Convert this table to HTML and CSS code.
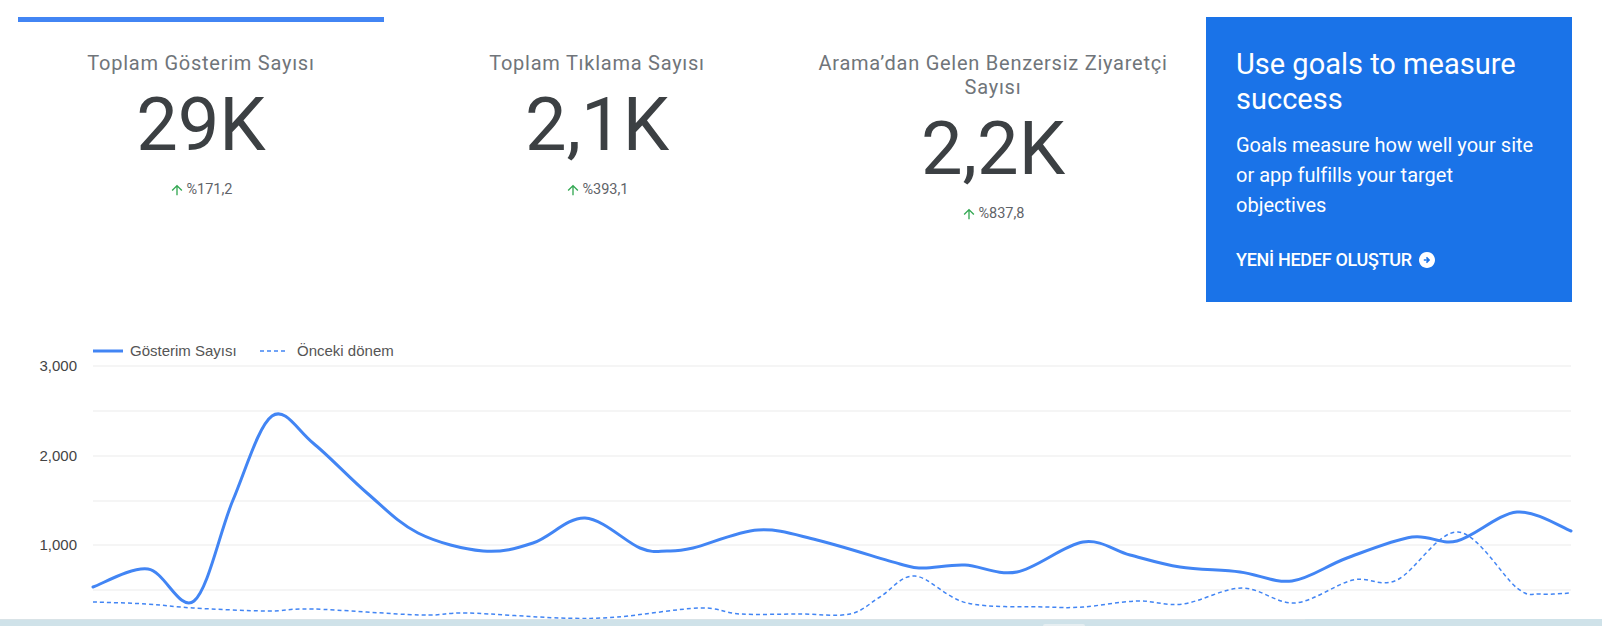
FILE: index.html
```html
<!DOCTYPE html>
<html lang="tr">
<head>
<meta charset="utf-8">
<title>Search Console özet</title>
<link rel="stylesheet" href="styles.css">
</head>
<body>
<div class="page">
  <div class="top">
    <div class="metric active">
      <div class="m-title">Toplam Gösterim Sayısı</div>
      <div class="m-value">29K</div>
      <div class="m-change"><svg class="up" viewBox="0 0 24 24"><path d="M4 12l1.41 1.41L11 7.83V20h2V7.83l5.58 5.59L20 12l-8-8-8 8z"/></svg><span>%171,2</span></div>
    </div>
    <div class="metric">
      <div class="m-title">Toplam Tıklama Sayısı</div>
      <div class="m-value">2,1K</div>
      <div class="m-change"><svg class="up" viewBox="0 0 24 24"><path d="M4 12l1.41 1.41L11 7.83V20h2V7.83l5.58 5.59L20 12l-8-8-8 8z"/></svg><span>%393,1</span></div>
    </div>
    <div class="metric">
      <div class="m-title">Arama’dan Gelen Benzersiz Ziyaretçi Sayısı</div>
      <div class="m-value">2,2K</div>
      <div class="m-change"><svg class="up" viewBox="0 0 24 24"><path d="M4 12l1.41 1.41L11 7.83V20h2V7.83l5.58 5.59L20 12l-8-8-8 8z"/></svg><span>%837,8</span></div>
    </div>
    <div class="goal-card">
      <h2 class="goal-title">Use goals to measure success</h2>
      <p class="goal-text">Goals measure how well your site or app fulfills your target objectives</p>
      <a class="goal-cta" href="#">YENİ HEDEF OLUŞTUR<svg class="cta-icon" viewBox="2 2 20 20"><path d="M12 2C6.48 2 2 6.48 2 12s4.48 10 10 10 10-4.48 10-10S17.52 2 12 2zm0 14l-1.41-1.41L12.17 13H8v-2h4.17l-1.59-1.59L12 8l4 4-4 4z"/></svg></a>
    </div>
  </div>

  <div class="chart">
    <svg class="chart-svg" width="1602" height="289" viewBox="0 0 1602 289">
      <g class="legend">
        <line x1="93" y1="21" x2="123" y2="21" class="leg-solid"/>
        <text x="130" y="26">Gösterim Sayısı</text>
        <line x1="260" y1="21" x2="288" y2="21" class="leg-dash"/>
        <text x="297" y="26">Önceki dönem</text>
      </g>
      <g class="grid">
        <line x1="93" y1="36" x2="1571" y2="36"/>
        <line x1="93" y1="81" x2="1571" y2="81"/>
        <line x1="93" y1="126" x2="1571" y2="126"/>
        <line x1="93" y1="171" x2="1571" y2="171"/>
        <line x1="93" y1="215" x2="1571" y2="215"/>
        <line x1="93" y1="260" x2="1571" y2="260"/>
      </g>
      <g class="axis">
        <text x="77" y="41">3,000</text>
        <text x="77" y="131">2,000</text>
        <text x="77" y="220">1,000</text>
      </g>
      <path class="series-prev" data-points="93,602 147,604 193,608 267,611 313,609 420,615 467,613 560,618 617,617 700,608 740,614 800,614 850,614 880,597 915,576 967,603 1047,607 1083,607 1137,601 1183,604 1242,588 1295,603 1353,580 1397,580 1458,532 1517,588 1540,594 1571,593"/>
      <path class="series-main" data-points="93,587 148,569 194,601 233,500 272,416 313,443 367,493 418,533 483,551 533,543 585,518 640,548 667,551 693,548 758,530 817,540 900,564 923,568 965,565 1017,572 1083,542 1130,555 1180,567 1240,572 1292,581 1347,558 1412,537 1457,541 1517,512 1571,531"/>
    </svg>
  </div>
  <div class="strip"><span class="strip-light"></span><span class="strip-knob"></span></div>
</div>
<script src="chart.js"></script>
</body>
</html>
```

FILE: styles.css
```css
html, body {
  margin: 0;
  padding: 0;
  background: #ffffff;
  overflow: hidden;
}
body {
  font-family: Roboto, "Liberation Sans", Arial, sans-serif;
  width: 1602px;
  height: 626px;
}
.page {
  width: 1602px;
  height: 626px;
  display: flex;
  flex-direction: column;
}
.top {
  display: grid;
  grid-template-columns: repeat(4, 366px);
  column-gap: 30px;
  padding: 17px 30px 0 18px;
  align-items: start;
}
.metric {
  border-top: 5px solid transparent;
  text-align: center;
  display: flex;
  flex-direction: column;
  align-items: center;
}
.metric.active {
  border-top-color: #4285f4;
}
.m-title {
  margin-top: 29px;
  font-size: 20px;
  line-height: 24px;
  letter-spacing: 0.75px;
  color: #70757a;
}
.m-value {
  margin-top: 10px;
  font-size: 74px;
  line-height: 80px;
  color: #3c4043;
}
.m-change {
  margin-top: 15px;
  display: flex;
  align-items: center;
  gap: 1px;
  font-size: 14.5px;
  line-height: 20px;
  color: #5f6368;
}
.up {
  width: 16px;
  height: 16px;
  fill: #34a853;
}
.goal-card {
  background: #1a73e8;
  color: #ffffff;
  height: 285px;
  box-sizing: border-box;
  padding: 30px 30px;
}
.goal-title {
  margin: 0;
  font-weight: 400;
  font-size: 29px;
  line-height: 35px;
}
.goal-text {
  margin: 13px 0 0;
  font-size: 20px;
  line-height: 30px;
}
.goal-cta {
  margin-top: 28px;
  display: inline-flex;
  align-items: center;
  gap: 7px;
  color: #ffffff;
  text-decoration: none;
  font-weight: 500;
  font-size: 18px;
  line-height: 24px;
  letter-spacing: -0.3px;
}
.cta-icon {
  width: 16px;
  height: 16px;
  fill: #ffffff;
}
.chart {
  margin-top: 28px;
  height: 289px;
  overflow: hidden;
}
.chart-svg {
  display: block;
  font-family: "Liberation Sans", Arial, sans-serif;
}
.legend text {
  font-size: 15px;
  fill: #555555;
}
.leg-solid {
  stroke: #4285f4;
  stroke-width: 3;
}
.leg-dash {
  stroke: #4285f4;
  stroke-width: 1.5;
  stroke-dasharray: 4 3;
}
.grid line {
  stroke: #ebebeb;
  stroke-width: 1;
}
.axis text {
  font-size: 15px;
  fill: #444444;
  text-anchor: end;
}
.series-main {
  fill: none;
  stroke: #4285f4;
  stroke-width: 3;
  stroke-linejoin: round;
  stroke-linecap: round;
}
.series-prev {
  fill: none;
  stroke: #4285f4;
  stroke-width: 1.5;
  stroke-dasharray: 4 3;
}
.strip {
  height: 7px;
  background: #cfe2e9;
  position: relative;
}
.strip-light {
  position: absolute;
  left: 0;
  top: 0;
  width: 1305px;
  height: 1px;
  background: #d9e3e7;
}
.strip-knob {
  position: absolute;
  left: 1043px;
  top: 5px;
  width: 42px;
  height: 3px;
  border-radius: 2px 2px 0 0;
  background: #e6eef1;
}
```

FILE: chart.js
```js
(function () {
  var OFFSET_Y = 330;
  var paths = document.querySelectorAll('path[data-points]');
  paths.forEach(function (el) {
    var pts = el.getAttribute('data-points').trim().split(/\s+/).map(function (p) {
      var xy = p.split(',');
      return [parseFloat(xy[0]), parseFloat(xy[1]) - OFFSET_Y];
    });
    var d = 'M' + pts[0][0] + ',' + pts[0][1];
    for (var i = 0; i < pts.length - 1; i++) {
      var p0 = pts[i - 1] || pts[i];
      var p1 = pts[i];
      var p2 = pts[i + 1];
      var p3 = pts[i + 2] || p2;
      var c1x = p1[0] + (p2[0] - p0[0]) / 6;
      var c1y = p1[1] + (p2[1] - p0[1]) / 6;
      var c2x = p2[0] - (p3[0] - p1[0]) / 6;
      var c2y = p2[1] - (p3[1] - p1[1]) / 6;
      d += ' C' + c1x.toFixed(1) + ',' + c1y.toFixed(1) + ' ' + c2x.toFixed(1) + ',' + c2y.toFixed(1) + ' ' + p2[0] + ',' + p2[1];
    }
    el.setAttribute('d', d);
  });
})();
```
